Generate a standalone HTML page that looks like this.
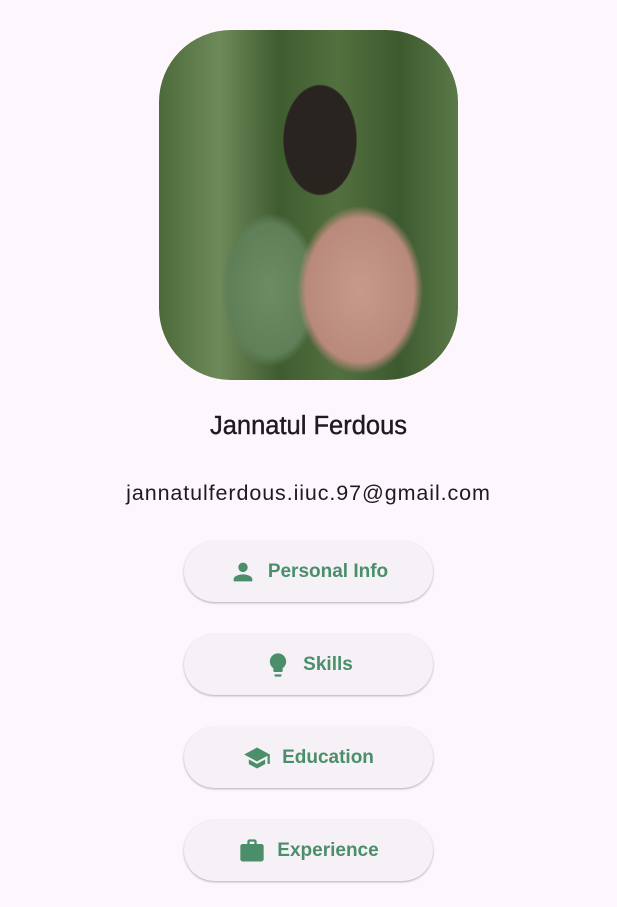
<!DOCTYPE html>
<html><head><meta charset="utf-8"><style>
body{margin:0;width:617px;height:907px;background:#fdf7fd;font-family:"Liberation Sans",Roboto,sans-serif;position:relative;overflow:hidden}
.photo{position:absolute;left:159px;top:30px;width:299px;height:350px;border-radius:72px;overflow:hidden;
background:
radial-gradient(ellipse 60px 90px at 320px 110px,#2a2420 0,#2a2420 60%,transparent 62%),
radial-gradient(ellipse 90px 120px at 360px 260px,#c69a8a 0,#b98a7c 60%,transparent 70%),
radial-gradient(ellipse 70px 110px at 270px 260px,#6d8c62 0,#5f7f58 60%,transparent 70%),
linear-gradient(90deg,#4c6a3a 0,#6f8a5a 20%,#3f5c30 40%,#53703f 60%,#3d5a2f 80%,#5b7848 100%);
background-position:-159px 0,-159px 0,-159px 0,0 0;background-size:617px 350px,617px 350px,617px 350px,100% 100%;background-repeat:no-repeat}
.name{position:absolute;top:412px;width:100%;text-align:center;font-size:25.5px;color:#1d1b20;-webkit-text-stroke:.4px #1d1b20}
.mail{position:absolute;top:481px;width:100%;text-align:center;font-size:21.5px;color:#1d1b20;letter-spacing:.9px}
.btn{position:absolute;left:184px;width:249px;height:61px;border-radius:31px;background:#f6f1f6;box-shadow:0 1px 2px rgba(0,0,0,.3);display:flex;align-items:center;justify-content:center;color:#4a8f6a;font-weight:bold;font-size:19px}
.btn svg{width:28px;height:28px;fill:#4a8f6a;margin-right:11px}
</style></head><body>
<div class="photo"></div>
<div class="name">Jannatul Ferdous</div>
<div class="mail">jannatulferdous.iiuc.97@gmail.com</div>
<div class="btn" style="top:541px"><svg viewBox="0 0 24 24"><path d="M12 12c2.2 0 4-1.8 4-4s-1.8-4-4-4-4 1.8-4 4 1.8 4 4 4zm0 2c-2.7 0-8 1.3-8 4v2h16v-2c0-2.7-5.300-4-8-4z"/></svg>Personal Info</div>
<div class="btn" style="top:634px"><svg viewBox="0 0 24 24"><path d="M9 21c0 .5.4 1 1 1h4c.6 0 1-.5 1-1v-1H9v1zm3-19C8.1 2 5 5.1 5 9c0 2.4 1.2 4.5 3 5.7V17c0 .5.4 1 1 1h6c.6 0 1-.5 1-1v-2.3c1.8-1.3 3-3.4 3-5.7 0-3.9-3.1-7-7-7z"/></svg>Skills</div>
<div class="btn" style="top:727px"><svg viewBox="0 0 24 24"><path d="M5 13.2v4L12 21l7-3.8v-4L12 17l-7-3.8zM12 3 1 9l11 6 9-4.9V17h2V9L12 3z"/></svg>Education</div>
<div class="btn" style="top:820px"><svg viewBox="0 0 24 24"><path d="M20 6h-4V4c0-1.1-.9-2-2-2h-4c-1.1 0-2 .9-2 2v2H4c-1.1 0-2 .9-2 2v11c0 1.1.9 2 2 2h16c1.1 0 2-.9 2-2V8c0-1.1-.9-2-2-2zm-6 0h-4V4h4v2z"/></svg>Experience</div>
</body></html>
